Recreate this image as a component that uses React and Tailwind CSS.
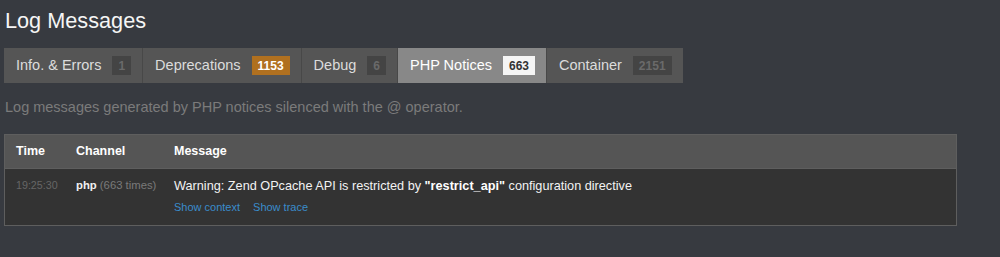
export default function App() {
  const tabs = [
    { label: "Info. & Errors", count: "1", kind: "muted" },
    { label: "Deprecations", count: "1153", kind: "warn" },
    { label: "Debug", count: "6", kind: "muted" },
    { label: "PHP Notices", count: "663", kind: "active" },
    { label: "Container", count: "2151", kind: "muted" },
  ];
  return (
    <div
      className="w-[1000px] h-[257px] bg-[#373a40] overflow-hidden pl-[4px]"
      style={{ fontFamily: '"Liberation Sans", Arial, sans-serif' }}
    >
      <h1 className="pt-[9px] pl-[1px] text-[21.7px] leading-[24px] text-[#f5f5f5] font-normal">
        Log Messages
      </h1>
      <div className="mt-[15px] flex w-max h-[35px] bg-[#484848] gap-px">
        {tabs.map((t) => {
          const active = t.kind === "active";
          return (
            <div
              key={t.label}
              className={
                "flex items-center gap-[11px] pl-[12px] pr-[11px] text-[14.5px] " +
                (active ? "bg-[#888888] text-white" : "bg-[#555555] text-[#dcdcdc]")
              }
            >
              <span>{t.label}</span>
              <span
                className={
                  "h-[19px] px-[6px] flex items-center text-[12px] font-bold " +
                  (t.kind === "warn"
                    ? "bg-[#b0701f] text-white"
                    : active
                    ? "bg-[#f5f5f5] text-[#333333]"
                    : "bg-[#444444] text-[#6a6a6a]")
                }
              >
                {t.count}
              </span>
            </div>
          );
        })}
      </div>
      <p className="mt-[14px] pl-[1px] text-[14.5px] leading-[20px] text-[#7b7b7b]">
        Log messages generated by PHP notices silenced with the @ operator.
      </p>
      <div className="mt-[17px] w-[953px] border border-[#5e5e5e] bg-[#333333]">
        <div className="flex h-[34px] items-center bg-[#555555] border-b border-[#5e5e5e] text-[12.5px] font-bold text-white">
          <div className="w-[60px] pl-[11px]">Time</div>
          <div className="w-[98px] pl-[11px]">Channel</div>
          <div className="flex-1 pl-[11px]">Message</div>
        </div>
        <div className="flex h-[56px]">
          <div className="w-[60px] pl-[11px] pt-[6px] text-[10.7px] leading-[20px] text-[#666666]">
            19:25:30
          </div>
          <div className="w-[98px] pl-[11px] pt-[6px] text-[11.3px] leading-[20px] text-[#7a7a7a]">
            <span className="font-bold text-[#f0f0f0]">php</span> (663 times)
          </div>
          <div className="flex-1 pl-[11px] pt-[7px]">
            <div className="text-[12.7px] leading-[20px] text-[#f2f2f2]">
              Warning: Zend OPcache API is restricted by{" "}
              <b className="font-bold text-white">"restrict_api"</b> configuration directive
            </div>
            <div className="mt-[1px] flex gap-[13px] text-[11px] leading-[20px] text-[#3a8ccb]">
              <span>Show context</span>
              <span>Show trace</span>
            </div>
          </div>
        </div>
      </div>
    </div>
  );
}
